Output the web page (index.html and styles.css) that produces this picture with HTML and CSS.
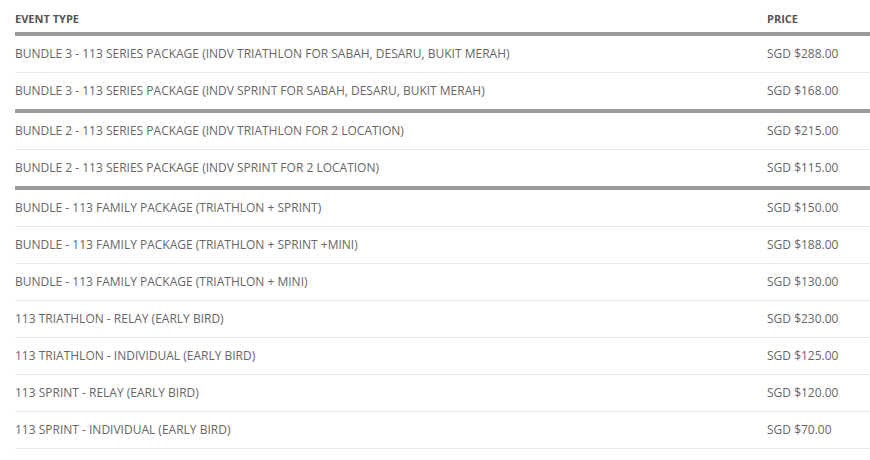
FILE: index.html
```html
<!DOCTYPE html>
<html>
<head>
<meta charset="utf-8">
<link rel="stylesheet" href="styles.css">
</head>
<body>
<div class="wrap">
<table class="prices">
  <thead>
    <tr><th class="col-type">EVENT TYPE</th><th class="col-price">PRICE</th></tr>
  </thead>
  <tbody>
    <tr><td>BUNDLE 3 - 113 SERIES PACKAGE (INDV TRIATHLON FOR SABAH, DESARU, BUKIT MERAH)</td><td>SGD $288.00</td></tr>
    <tr><td>BUNDLE 3 - 113 SERIES PACKAGE (INDV SPRINT FOR SABAH, DESARU, BUKIT MERAH)</td><td>SGD $168.00</td></tr>
  </tbody>
  <tbody>
    <tr><td>BUNDLE 2 - 113 SERIES PACKAGE (INDV TRIATHLON FOR 2 LOCATION)</td><td>SGD $215.00</td></tr>
    <tr><td>BUNDLE 2 - 113 SERIES PACKAGE (INDV SPRINT FOR 2 LOCATION)</td><td>SGD $115.00</td></tr>
  </tbody>
  <tbody>
    <tr><td>BUNDLE - 113 FAMILY PACKAGE (TRIATHLON + SPRINT)</td><td>SGD $150.00</td></tr>
    <tr><td>BUNDLE - 113 FAMILY PACKAGE (TRIATHLON + SPRINT +MINI)</td><td>SGD $188.00</td></tr>
    <tr><td>BUNDLE - 113 FAMILY PACKAGE (TRIATHLON + MINI)</td><td>SGD $130.00</td></tr>
    <tr><td>113 TRIATHLON - RELAY (EARLY BIRD)</td><td>SGD $230.00</td></tr>
    <tr><td>113 TRIATHLON - INDIVIDUAL (EARLY BIRD)</td><td>SGD $125.00</td></tr>
    <tr><td>113 SPRINT - RELAY (EARLY BIRD)</td><td>SGD $120.00</td></tr>
    <tr><td>113 SPRINT - INDIVIDUAL (EARLY BIRD)</td><td>SGD $70.00</td></tr>
  </tbody>
</table>
</div>
</body>
</html>
```
FILE: styles.css
```css
html, body {
  margin: 0;
  padding: 0;
  background: #fff;
}
.wrap {
  padding: 0 0 0 15px;
}
.prices {
  width: 100%;
  border-collapse: collapse;
  font-family: "Open Sans", "DejaVu Sans", sans-serif;
  font-size: 12px;
  color: #666;
}
.prices th {
  text-align: left;
  font-weight: 700;
  font-size: 11px;
  color: #555;
  height: 32px;
  padding: 12px 0 6px 0;
  vertical-align: middle;
  line-height: 14px;
  box-sizing: border-box;
}
.col-type {
  width: 752px;
}
.prices tbody {
  border-top: 4px solid #9b9b9b;
}
.prices td {
  padding: 0;
  height: 36px;
  line-height: 16px;
  vertical-align: middle;
  border-bottom: 1px solid #e8e8e8;
}
```
